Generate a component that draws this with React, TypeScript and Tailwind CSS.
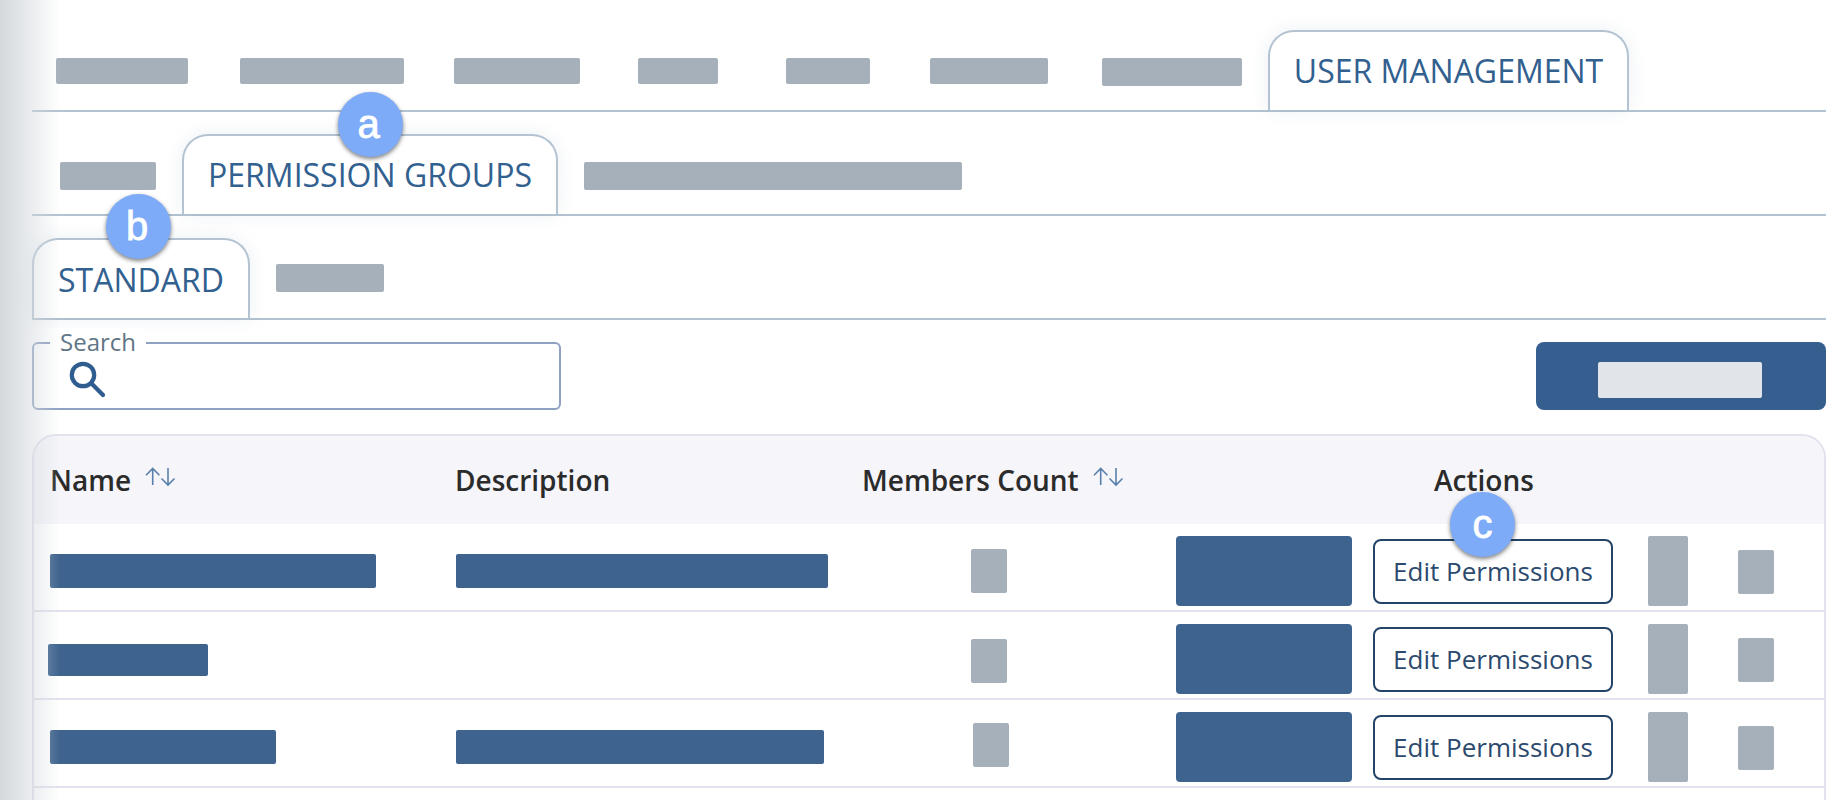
import React from "react";

const GREY = "bg-[#a6b0ba] rounded-[2px] shrink-0";
const BLUE = "bg-[#3e638e] rounded-[2px] shrink-0";
const font = "font-['Open_Sans','Noto_Sans',sans-serif]";

function Bar({ cls }: { cls: string }) {
  return <div className={cls} />;
}

function Tab({ label, cls }: { label: string; cls: string }) {
  return (
    <div
      className={`relative flex shrink-0 items-start justify-center whitespace-nowrap rounded-t-[26px] border-2 border-b-0 border-[#b3c3d2] bg-white text-[32px] text-[#32608f] shadow-[0_0_18px_rgba(120,140,170,0.14)] ${cls}`}
    >
      {label}
    </div>
  );
}

function Badge({ letter, cls, inner }: { letter: string; cls: string; inner: string }) {
  return (
    <div
      className={`absolute z-20 flex h-[65px] w-[65px] items-center justify-center rounded-full bg-[#7dabf8] font-['Liberation_Sans',sans-serif] text-[40px] leading-none text-white [-webkit-text-stroke:0.8px_white] shadow-[0_2px_4px_rgba(0,0,0,0.5)] ${cls}`}
    >
      <span className={inner}>{letter}</span>
    </div>
  );
}

function SortIcon({ cls }: { cls: string }) {
  return (
    <svg
      viewBox="0 0 32 20"
      fill="none"
      stroke="#5a80ab"
      strokeWidth="1.6"
      className={`h-[20px] w-[32px] shrink-0 ${cls}`}
    >
      <path d="M7.7 18V1.5M1 8.2 7.7 1.5 14.4 8.2" />
      <path d="M23 1v17M16.5 11.5 23 18 29.5 11.5" />
    </svg>
  );
}

const rows = [
  {
    name: "ml-[16px] w-[326px] h-[34px] mt-[30px]",
    desc: "w-[372px] h-[34px] mt-[30px]",
    count: "ml-[109px] w-[36px] h-[44px] mt-[25px]",
  },
  {
    name: "ml-[14px] w-[160px] h-[32px] mt-[32px]",
    desc: "",
    count: "ml-[109px] w-[36px] h-[44px] mt-[27px]",
  },
  {
    name: "ml-[16px] w-[226px] h-[34px] mt-[30px]",
    desc: "w-[368px] h-[34px] mt-[30px]",
    count: "ml-[111px] w-[36px] h-[44px] mt-[23px]",
  },
];

export default function App() {
  return (
    <div className={`relative h-[800px] w-full overflow-hidden bg-white ${font}`}>
      <div className="pl-[32px] pr-[16px]">
        {/* Top tabs */}
        <div className="flex h-[112px] items-start border-b-2 border-[#b3c3d2] pt-[30px]">
          <Bar cls={`${GREY} ml-[24px] mt-[28px] h-[26px] w-[132px]`} />
          <Bar cls={`${GREY} ml-[52px] mt-[28px] h-[26px] w-[164px]`} />
          <Bar cls={`${GREY} ml-[50px] mt-[28px] h-[26px] w-[126px]`} />
          <Bar cls={`${GREY} ml-[58px] mt-[28px] h-[26px] w-[80px]`} />
          <Bar cls={`${GREY} ml-[68px] mt-[28px] h-[26px] w-[84px]`} />
          <Bar cls={`${GREY} ml-[60px] mt-[28px] h-[26px] w-[118px]`} />
          <Bar cls={`${GREY} ml-[54px] mt-[28px] h-[28px] w-[140px]`} />
          <Tab label="USER MANAGEMENT" cls="ml-[26px] h-[80px] w-[361px] pt-[20px] leading-[38px]" />
        </div>
        {/* Second tabs */}
        <div className="flex h-[104px] items-start border-b-2 border-[#b3c3d2] pt-[22px]">
          <Bar cls={`${GREY} ml-[28px] mt-[28px] h-[28px] w-[96px]`} />
          <Tab label="PERMISSION GROUPS" cls="ml-[26px] h-[80px] w-[376px] pt-[20px] leading-[38px]" />
          <Bar cls={`${GREY} ml-[26px] mt-[28px] h-[28px] w-[378px]`} />
        </div>
        {/* Third tabs */}
        <div className="flex h-[104px] items-start border-b-2 border-[#b3c3d2] pt-[22px]">
          <Tab label="STANDARD" cls="h-[80px] w-[218px] pt-[21px] leading-[38px]" />
          <Bar cls={`${GREY} ml-[26px] mt-[26px] h-[28px] w-[108px]`} />
        </div>
        {/* Search and button */}
        <div className="mt-[22px] flex items-start justify-between">
          <div className="relative h-[68px] w-[529px] rounded-[6px] border-2 border-[#8fa1c2]">
            <span className="absolute -top-[16px] left-[16px] bg-white px-[10px] text-[24px] leading-[28px] text-[#5f7585]">
              Search
            </span>
            <svg viewBox="0 0 38 38" fill="none" stroke="#2f5d8f" className="absolute left-[34px] top-[16px] h-[38px] w-[38px]">
              <circle cx="15" cy="15" r="11.2" strokeWidth="4.2" />
              <path d="M23.5 23.5 35 35" strokeWidth="4.2" strokeLinecap="round" />
            </svg>
          </div>
          <div className="flex h-[68px] w-[290px] items-start rounded-[8px] bg-[#365f90]">
            <div className="ml-[62px] mt-[20px] h-[36px] w-[164px] rounded-[2px] bg-[#e1e4e9]" />
          </div>
        </div>
        {/* Table */}
        <div className="mt-[24px] h-[400px] rounded-t-[24px] border-2 border-b-0 border-[#e2e2ee] text-[#2b2b2b]">
          <div className="grid h-[88px] grid-cols-[422px_406px_314px_197px_275px_90px_1fr] items-center rounded-t-[22px] bg-[#f5f5fa] text-[28px] font-semibold">
            <div className="flex items-center pl-[16px]">
              <span>Name</span>
              <SortIcon cls="ml-[14px] -mt-[6px]" />
            </div>
            <div className="-ml-[1px]">Description</div>
            <div className="flex items-center whitespace-nowrap">
              <span>Members Count</span>
              <SortIcon cls="ml-[14px] -mt-[6px]" />
            </div>
            <div className="col-span-2 pl-[258px]">Actions</div>
          </div>
          {rows.map((r, i) => (
            <div
              key={i}
              className="grid h-[88px] grid-cols-[422px_406px_314px_197px_275px_90px_1fr] items-start border-b-2 border-[#e2e2ee]"
            >
              <div className="flex">
                <Bar cls={`${BLUE} ${r.name}`} />
              </div>
              <div className="flex">{r.desc ? <Bar cls={`${BLUE} ${r.desc}`} /> : null}</div>
              <div className="flex">
                <Bar cls={`${GREY} ${r.count}`} />
              </div>
              <div className="flex">
                <Bar cls={`${BLUE} mt-[12px] h-[70px] w-[176px] rounded-[4px]`} />
              </div>
              <div className="flex">
                <button className="mt-[15px] h-[65px] w-[240px] rounded-[8px] border-2 border-[#234468] bg-white text-center text-[26px] text-[#2c4a6e]">
                  Edit Permissions
                </button>
              </div>
              <div className="flex">
                <Bar cls={`${GREY} mt-[12px] h-[70px] w-[40px]`} />
              </div>
              <div className="flex">
                <Bar cls={`${GREY} mt-[26px] h-[44px] w-[36px]`} />
              </div>
            </div>
          ))}
        </div>
      </div>

      {/* Callouts and the shaded page edge */}
      <Badge letter="a" cls="left-[338px] top-[92px]" inner="-ml-[4px] -mt-[2px]" />
      <Badge letter="b" cls="left-[106px] top-[194px]" inner="-ml-[3px] -mt-[2px]" />
      <Badge letter="c" cls="left-[1450px] top-[492px]" inner="-mt-[1px]" />
      <div className="pointer-events-none absolute inset-y-0 left-0 w-[60px] bg-gradient-to-r from-[#d3d8dc] to-transparent" />
    </div>
  );
}
